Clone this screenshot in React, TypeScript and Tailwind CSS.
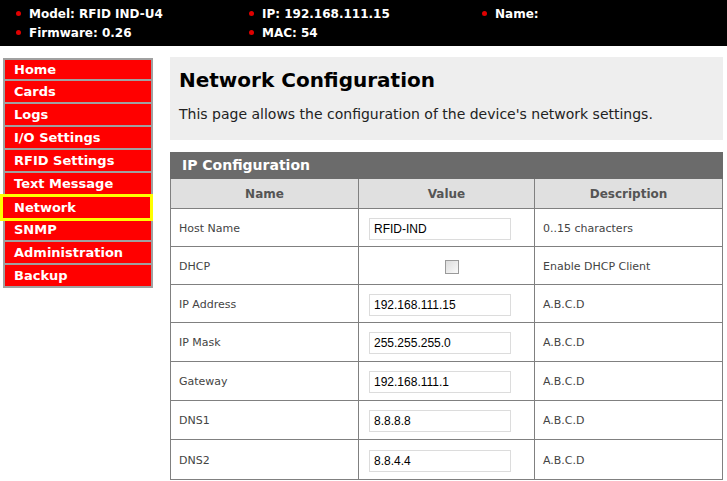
import React from 'react'

const nav = ['Home', 'Cards', 'Logs', 'I/O Settings', 'RFID Settings', 'Text Message', 'Network', 'SNMP', 'Administration', 'Backup']

const rows: { name: string; value?: string; checkbox?: boolean; desc: string; h: string }[] = [
  { name: 'Host Name', value: 'RFID-IND', desc: '0..15 characters', h: 'h-[38px]' },
  { name: 'DHCP', checkbox: true, desc: 'Enable DHCP Client', h: 'h-[38px]' },
  { name: 'IP Address', value: '192.168.111.15', desc: 'A.B.C.D', h: 'h-[38px]' },
  { name: 'IP Mask', value: '255.255.255.0', desc: 'A.B.C.D', h: 'h-[39px]' },
  { name: 'Gateway', value: '192.168.111.1', desc: 'A.B.C.D', h: 'h-[39px]' },
  { name: 'DNS1', value: '8.8.8.8', desc: 'A.B.C.D', h: 'h-[39px]' },
  { name: 'DNS2', value: '8.8.4.4', desc: 'A.B.C.D', h: 'h-[39px]' },
]

function Info({ label }: { label: string }) {
  return (
    <div className="flex items-center pl-[16px] h-[19px]">
      <span className="w-[5px] h-[5px] rounded-full bg-[#e00000] mr-[8px]" />
      <span>{label}</span>
    </div>
  )
}

export default function App() {
  return (
    <div className="w-[727px] h-[481px] overflow-hidden bg-white font-['DejaVu_Sans',sans-serif]">
      {/* Device status bar */}
      <div className="h-[46px] bg-black pt-[4px] grid grid-cols-[233px_233px_1fr] text-white text-[12px] font-bold">
        <div>
          <Info label="Model: RFID IND-U4" />
          <Info label="Firmware: 0.26" />
        </div>
        <div>
          <Info label="IP: 192.168.111.15" />
          <Info label="MAC: 54" />
        </div>
        <div>
          <Info label="Name:" />
        </div>
      </div>

      <div className="flex pt-[11px]">
        {/* Menu */}
        <div className="ml-[3px] mt-[1px] w-[150px] flex flex-col">
          {nav.map((item, i) =>
            item === 'Network' ? (
              <div
                key={item}
                className="relative z-10 -ml-[3px] w-[153px] h-[27px] -my-[2px] border-[3px] border-[#ffff00] bg-[#ff0000] pl-[11px] flex items-center text-white font-bold text-[13px]"
              >
                {item}
              </div>
            ) : (
              <div
                key={item}
                className={`h-[23px] bg-[#ff0000] border-x-2 border-b-2 border-[#a0a0a0] ${i === 0 ? 'border-t-2' : ''} pl-[9px] flex items-center text-white font-bold text-[13px]`}
              >
                {item}
              </div>
            )
          )}
        </div>

        {/* Main */}
        <div className="ml-[17px] w-[553px]">
          <div className="h-[83px] bg-[#eeeeee] pl-[9px] pt-[10px]">
            <h1 className="text-[20px] font-bold text-black leading-[27px]">Network Configuration</h1>
            <p className="mt-[10px] text-[14px] text-[#222] leading-[20px]">
              This page allows the configuration of the device's network settings.
            </p>
          </div>

          <div className="mt-[12px]">
            <div className="h-[27px] bg-[#6b6b6b] pl-[12px] flex items-center text-white font-bold text-[14px]">
              IP Configuration
            </div>
            <div className="border-x border-b border-[#808080]">
              <div className="grid grid-cols-[188px_176px_1fr] h-[30px] bg-[#e0e0e0] border-b border-[#808080] text-[12px] font-bold text-[#555]">
                <div className="flex items-center justify-center border-r border-[#808080]">Name</div>
                <div className="flex items-center justify-center border-r border-[#808080]">Value</div>
                <div className="flex items-center justify-center">Description</div>
              </div>
              {rows.map((r, i) => (
                <div
                  key={r.name}
                  className={`grid grid-cols-[188px_176px_1fr] ${r.h} text-[11px] text-[#444] ${i < rows.length - 1 ? 'border-b border-[#808080]' : ''}`}
                >
                  <div className="flex items-center pl-[8px] pt-[3px] border-r border-[#808080]">{r.name}</div>
                  <div className="flex items-center pt-[2px] border-r border-[#808080]">
                    {r.checkbox ? (
                      <span className="ml-[86px] w-[14px] h-[14px] border border-[#9a9a9a] bg-gradient-to-br from-[#dcdcdc] to-[#fafafa]" />
                    ) : (
                      <div className="ml-[10px] w-[142px] h-[22px] border border-[#dcdcdc] flex items-center pl-[4px] text-[12px] text-black font-['Liberation_Sans',sans-serif]">
                        {r.value}
                      </div>
                    )}
                  </div>
                  <div className="flex items-center pl-[8px] pt-[3px]">{r.desc}</div>
                </div>
              ))}
            </div>
          </div>
        </div>
      </div>
    </div>
  )
}
